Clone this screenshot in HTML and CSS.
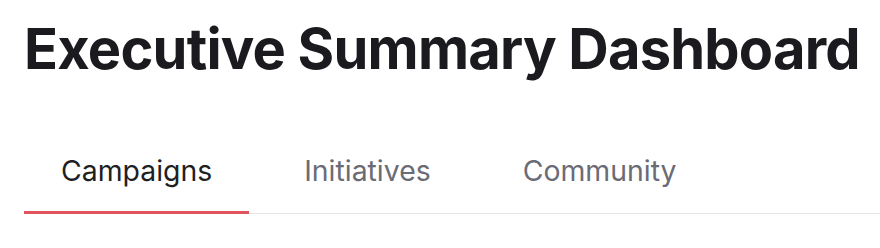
FILE: index.html
```html
<!DOCTYPE html>
<html lang="en">
<head>
<meta charset="utf-8">
<title>Executive Summary Dashboard</title>
<link rel="stylesheet" href="styles.css">
</head>
<body>
<main class="page">
  <h1 class="title">Executive Summary Dashboard</h1>
  <nav class="tabs" role="tablist">
    <button class="tab tab-active" role="tab" aria-selected="true">Campaigns</button>
    <button class="tab" role="tab" aria-selected="false">Initiatives</button>
    <button class="tab" role="tab" aria-selected="false">Community</button>
  </nav>
</main>
</body>
</html>
```
FILE: styles.css
```css
html, body {
  margin: 0;
  padding: 0;
  background: #ffffff;
}
.page {
  padding: 0 0 0 24px;
}
.title {
  margin: 16px 0 0 0;
  font-family: Inter, "Noto Sans", sans-serif;
  font-weight: 700;
  font-size: 56px;
  line-height: 67px;
  color: #1b1b1f;
  letter-spacing: -0.78px;
  white-space: nowrap;
}
.tabs {
  display: flex;
  gap: 18px;
  margin-top: 40px;
  border-bottom: 1px solid #e5e5e7;
}
.tab {
  font-family: Inter, "Noto Sans", sans-serif;
  font-size: 28.4px;
  line-height: 42px;
  font-weight: 400;
  color: #6b6b76;
  background: none;
  border: 0;
  border-bottom: 4px solid transparent;
  margin: 0 0 -2px 0;
  padding: 27px 37px 19px 37px;
  cursor: pointer;
}
.tab-active {
  color: #1f1f23;
  border-bottom-color: #e0545b;
}
```
